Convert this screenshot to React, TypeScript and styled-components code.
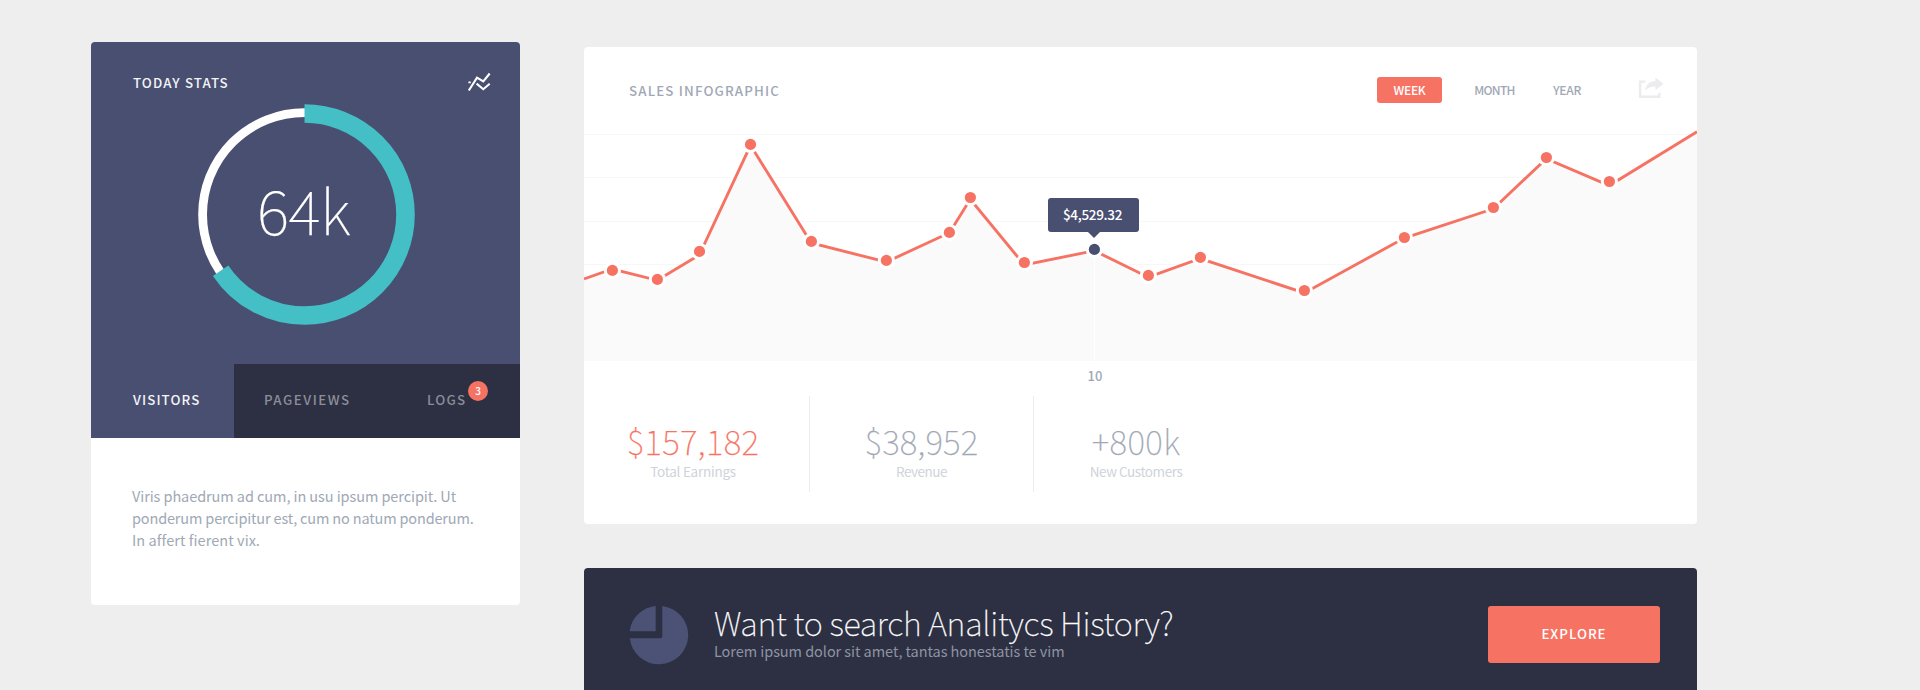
import React from "react";
import styled, { createGlobalStyle } from "styled-components";

const color = {
  page: "#eeeeee",
  indigo: "#494f70",
  night: "#2c3042",
  coral: "#f67364",
  teal: "#43bfc5",
  slate: "#a0a8b5",
  pale: "#d0d3d9",
  area: "#fafafa",
  grid: "#f7f7f8",
};

const Global = createGlobalStyle`
  * { box-sizing: border-box; }
  body {
    margin: 0;
    background: ${color.page};
    font-family: "Noto Sans CJK SC", "Noto Sans", sans-serif;
    overflow: hidden;
  }
`;

const Page = styled.main`
  display: flex;
  align-items: flex-start;
  gap: 64px;
  height: 690px;
  padding-left: 91px;
  overflow: hidden;
`;

const Label = styled.span<{ $size?: number; $weight?: number; $track?: number; $color?: string; $line?: number }>`
  display: block;
  white-space: nowrap;
  font-size: ${(p) => p.$size ?? 14}px;
  font-weight: ${(p) => p.$weight ?? 400};
  letter-spacing: ${(p) => p.$track ?? 0}px;
  line-height: ${(p) => p.$line ?? 20}px;
  color: ${(p) => p.$color ?? color.slate};
`;

const Caption = styled(Label)`
  font-size: 13.3px;
  font-weight: 500;
`;

const Display = styled(Label)`
  font-weight: 100;
  -webkit-text-stroke: 0.25px currentColor;
`;

/* Today stats */

const StatsCard = styled.section`
  flex: none;
  width: 429px;
  height: 563px;
  margin-top: 42px;
  border-radius: 4px;
  background: #fff;
  overflow: hidden;
`;

const StatsTop = styled.div`
  height: 322px;
  background: ${color.indigo};
`;

const StatsHeader = styled.header`
  display: flex;
  justify-content: space-between;
  align-items: flex-start;
  height: 61px;
  padding: 30px 29px 0 42px;
`;

const StatsTitle = styled.div`
  padding-top: 1px;
`;

const Gauge = styled.div`
  display: grid;
  place-items: center;
  width: 222px;
  height: 223px;
  margin-left: 101.5px;

  > * {
    grid-area: 1 / 1;
  }
`;

const GaugeValue = styled.div`
  padding-bottom: 11px;
`;

const Tabs = styled.nav`
  display: grid;
  grid-template-columns: 143px 143px 1fr;
  height: 74px;
  background: ${color.night};
`;

const Tab = styled.div<{ $active?: boolean; $indent: number }>`
  display: flex;
  align-items: center;
  padding: 0 0 2px ${(p) => p.$indent}px;
  background: ${(p) => (p.$active ? color.indigo : "transparent")};
`;

const BadgeAnchor = styled.div`
  position: relative;
`;

const Badge = styled.span`
  position: absolute;
  left: 41px;
  top: -9px;
  width: 20px;
  height: 20px;
  border-radius: 50%;
  background: ${color.coral};
  color: #fff;
  font-size: 10px;
  font-weight: 500;
  line-height: 20px;
  text-align: center;
`;

const Blurb = styled.div`
  padding: 47px 0 0 41px;
`;

/* Right column */

const Column = styled.div`
  display: flex;
  flex-direction: column;
  gap: 44px;
  width: 1113px;
  padding-top: 47px;
`;

const SalesCard = styled.section`
  height: 477px;
  border-radius: 4px;
  background: #fff;
  overflow: hidden;
`;

const SalesHeader = styled.header`
  display: flex;
  align-items: flex-start;
  height: 77px;
  padding: 30px 33px 0 45px;
`;

const SalesTitle = styled.div`
  flex: 1;
  padding-top: 4px;
`;

const Range = styled.div`
  display: flex;
  align-items: center;
  height: 26px;
`;

const RangeItem = styled.div<{ $active?: boolean; $width: number }>`
  display: flex;
  justify-content: center;
  align-items: center;
  width: ${(p) => p.$width}px;
  height: 26px;
  padding-bottom: 1px;
  border-radius: 3px;
  background: ${(p) => (p.$active ? color.coral : "transparent")};
`;

const ShareSlot = styled.div`
  width: 27px;
  height: 22px;
  margin-left: 50px;
`;

const Chart = styled.div`
  position: relative;
  height: 237px;

  svg {
    display: block;
  }
`;

const Tooltip = styled.div`
  position: absolute;
  left: 464px;
  top: 74px;
  width: 91px;
  height: 34px;
  padding: 6px 2px 0 0;
  border-radius: 3px;
  background: ${color.indigo};
  text-align: center;

  &::after {
    content: "";
    position: absolute;
    left: 39.5px;
    top: 33.5px;
    border: 6px solid transparent;
    border-top: 6.5px solid ${color.indigo};
    border-bottom: 0;
  }
`;

const Axis = styled.div`
  height: 35px;
  padding: 5px 0 0 503.500px;
`;

const Figures = styled.div`
  display: flex;
`;

const Figure = styled.div<{ $width: number; $shift: number }>`
  display: flex;
  flex-direction: column;
  align-items: center;
  width: ${(p) => p.$width}px;
  height: 96px;
  padding: 25px ${(p) => p.$shift}px 0 0;
  border-right: 1px solid #ededf0;

  &:last-child {
    border-right: 0;
  }
`;

const Banner = styled.section`
  display: flex;
  align-items: flex-start;
  height: 140px;
  padding: 37px 37px 0 45px;
  border-radius: 4px 4px 0 0;
  background: ${color.night};
`;

const BannerText = styled.div`
  flex: 1;
  margin: -2px 0 0 25px;
`;

const Explore = styled.button`
  width: 172px;
  height: 57px;
  margin-top: 1px;
  padding: 0 0 2px;
  border: 0;
  border-radius: 3px;
  background: ${color.coral};
  font-family: inherit;
`;

const RING = 2 * Math.PI * 101;
const RATIO = 0.655;

const Ring = () => (
  <svg width="222" height="223" viewBox="0 0 222 223" fill="none">
    <circle cx="111.5" cy="111.5" r="101.9" stroke="#fff" strokeWidth="8.8" />
    <circle
      cx="111.5"
      cy="111.5"
      r="101"
      stroke={color.teal}
      strokeWidth="18.6"
      strokeDasharray={`${RING * RATIO} ${RING}`}
      transform="rotate(-90 111.5 111.5)"
    />
  </svg>
);

const TrendIcon = () => (
  <svg width="24" height="20" viewBox="0 0 24 20" fill="none" stroke="#fff" strokeWidth="2.1">
    <path d="M1.8 18.5 10 5.7l6.3 3.8L22.7 1.5" />
    <path d="m9.6 11.6 6.7 5.6 6.4-5.4" />
    <path d="M1.4 10.3h2.4" strokeWidth="1.8" />
  </svg>
);

const ShareIcon = () => (
  <svg width="27" height="22" viewBox="0 0 27 22" fill="#ececee">
    <path d="M9 3.6H1.9v17.3h21.6v-6l-2.4 1.8v1.9H4.3V5.9h3z" />
    <path d="M18.4 0.6l8.2 6.2-8.2 6.5V9.6c-4.2 0-7.2.7-10.1 3.8.4-5.6 4.6-9 10.1-9.3z" />
  </svg>
);

const PieIcon = () => (
  <svg width="60" height="60" viewBox="0 0 60 60" fill="#4b5275">
    <path d="M26.700 .9V26.300H.6A29.300 29.300 0 0 1 26.700 .9Z" />
    <path d="M33.300 .9A29.300 29.300 0 1 1 .8 33.300H31.300a2 2 0 0 0 2-2Z" />
  </svg>
);

const vertices: [number, number][] = [
  [0, 155], [28.3, 145], [73.3, 156.3], [115.3, 131], [166.5, 21.3], [227.3, 119],
  [302.3, 138], [365.5, 108.7], [386.3, 75.3], [440.3, 141], [510.3, 126.7],
  [564.3, 153.2], [616.3, 134.5], [720.3, 169], [820.3, 114], [909.3, 84.8],
  [962.3, 34.6], [1025.3, 61.6], [1113, 7.8],
];

const dots: [number, number][] = [
  [28.4, 146.4], [73.4, 155.4], [115.5, 127.4], [166.5, 20.4], [227.4, 117.4],
  [302.4, 136.4], [365.4, 108.4], [386.4, 73.5], [440.4, 138.5], [510.4, 125.4],
  [564.4, 151.4], [616.4, 133.4], [720.4, 166.5], [820.4, 113.5], [909.4, 83.5],
  [962.4, 33.5], [1025.4, 57.5],
];

const line = vertices.map((v) => v.join(",")).join(" ");

const SalesChart = () => (
  <svg width="1113" height="237" viewBox="0 0 1113 237" fill="none">
    {[10, 53, 97, 140].map((y) => (
      <rect key={y} y={y} width="1113" height="1" fill={color.grid} />
    ))}
    <polygon points={`${line} 1113,237 0,237`} fill={color.area} />
    <rect x="510" y="126" width="1" height="111" fill="#fff" />
    <polyline points={line} stroke={color.coral} strokeWidth="2.9" />
    {dots.map(([x, y], i) => (
      <g key={x}>
        <circle cx={x} cy={y} r="8.6" fill="#fff" />
        <circle cx={x} cy={y} r="5.6" fill={i === 9 ? color.indigo : color.coral} />
      </g>
    ))}
  </svg>
);

export default function App() {
  return (
    <>
      <Global />
      <Page>
        <StatsCard>
          <StatsTop>
            <StatsHeader>
              <StatsTitle>
                <Caption $color="#f3f4f8" $track={1.1}>TODAY STATS</Caption>
              </StatsTitle>
              <TrendIcon />
            </StatsHeader>
            <Gauge>
              <Ring />
              <GaugeValue>
                <Display $size={61.5} $track={-0.6} $line={80} $color="#fff">64k</Display>
              </GaugeValue>
            </Gauge>
          </StatsTop>
          <Tabs>
            <Tab $active $indent={42}>
              <Caption $track={1.1} $color="#f3f4f8">VISITORS</Caption>
            </Tab>
            <Tab $indent={30}>
              <Caption $track={1.5} $color="#8b8d98">PAGEVIEWS</Caption>
            </Tab>
            <Tab $indent={50}>
              <BadgeAnchor>
                <Caption $track={1.2} $color="#8b8d98">LOGS</Caption>
                <Badge>3</Badge>
              </BadgeAnchor>
            </Tab>
          </Tabs>
          <Blurb>
            <Label $size={14.5} $track={-0.08} $line={22}>Viris phaedrum ad cum, in usu ipsum percipit. Ut</Label>
            <Label $size={14.5} $track={-0.16} $line={22}>ponderum percipitur est, cum no natum ponderum.</Label>
            <Label $size={14.5} $track={0.06} $line={22}>In affert fierent vix.</Label>
          </Blurb>
        </StatsCard>

        <Column>
          <SalesCard>
            <SalesHeader>
              <SalesTitle>
                <Caption $track={1.15}>SALES INFOGRAPHIC</Caption>
              </SalesTitle>
              <Range>
                <RangeItem $active $width={65}>
                  <Label $size={12} $weight={500} $track={-0.3} $color="#fff">WEEK</Label>
                </RangeItem>
                <RangeItem $width={105}>
                  <Label $size={12} $weight={500} $track={-0.7}>MONTH</Label>
                </RangeItem>
                <RangeItem $width={40}>
                  <Label $size={12} $weight={500} $track={-0.3}>YEAR</Label>
                </RangeItem>
              </Range>
              <ShareSlot>
                <ShareIcon />
              </ShareSlot>
            </SalesHeader>
            <Chart>
              <SalesChart />
              <Tooltip>
                <Label $size={13.5} $weight={500} $track={-0.3} $color="#fff">$4,529.32</Label>
              </Tooltip>
            </Chart>
            <Axis>
              <Label $size={13} $weight={500}>10</Label>
            </Axis>
            <Figures>
              <Figure $width={226} $shift={7}>
                <Display $size={33.5} $track={0.3} $line={40} $color={color.coral}>$157,182</Display>
                <Label $size={13.5} $track={-0.25} $color={color.pale}>Total Earnings</Label>
              </Figure>
              <Figure $width={224} $shift={0}>
                <Display $size={33.5} $track={0.2} $line={40}>$38,952</Display>
                <Label $size={13.5} $track={-0.5} $color={color.pale}>Revenue</Label>
              </Figure>
              <Figure $width={205} $shift={1}>
                <Display $size={33.5} $track={0.4} $line={40}>+800k</Display>
                <Label $size={13.5} $track={-0.45} $color={color.pale}>New Customers</Label>
              </Figure>
            </Figures>
          </SalesCard>

          <Banner>
            <PieIcon />
            <BannerText>
              <Display $size={32.5} $track={-0.28} $line={38} $color="#fff">Want to search Analitycs History?</Display>
              <Label $size={14.5} $track={-0.06} $color="#8f94a3">Lorem ipsum dolor sit amet, tantas honestatis te vim</Label>
            </BannerText>
            <Explore type="button">
              <Caption $track={1} $color="#fff">EXPLORE</Caption>
            </Explore>
          </Banner>
        </Column>
      </Page>
    </>
  );
}
